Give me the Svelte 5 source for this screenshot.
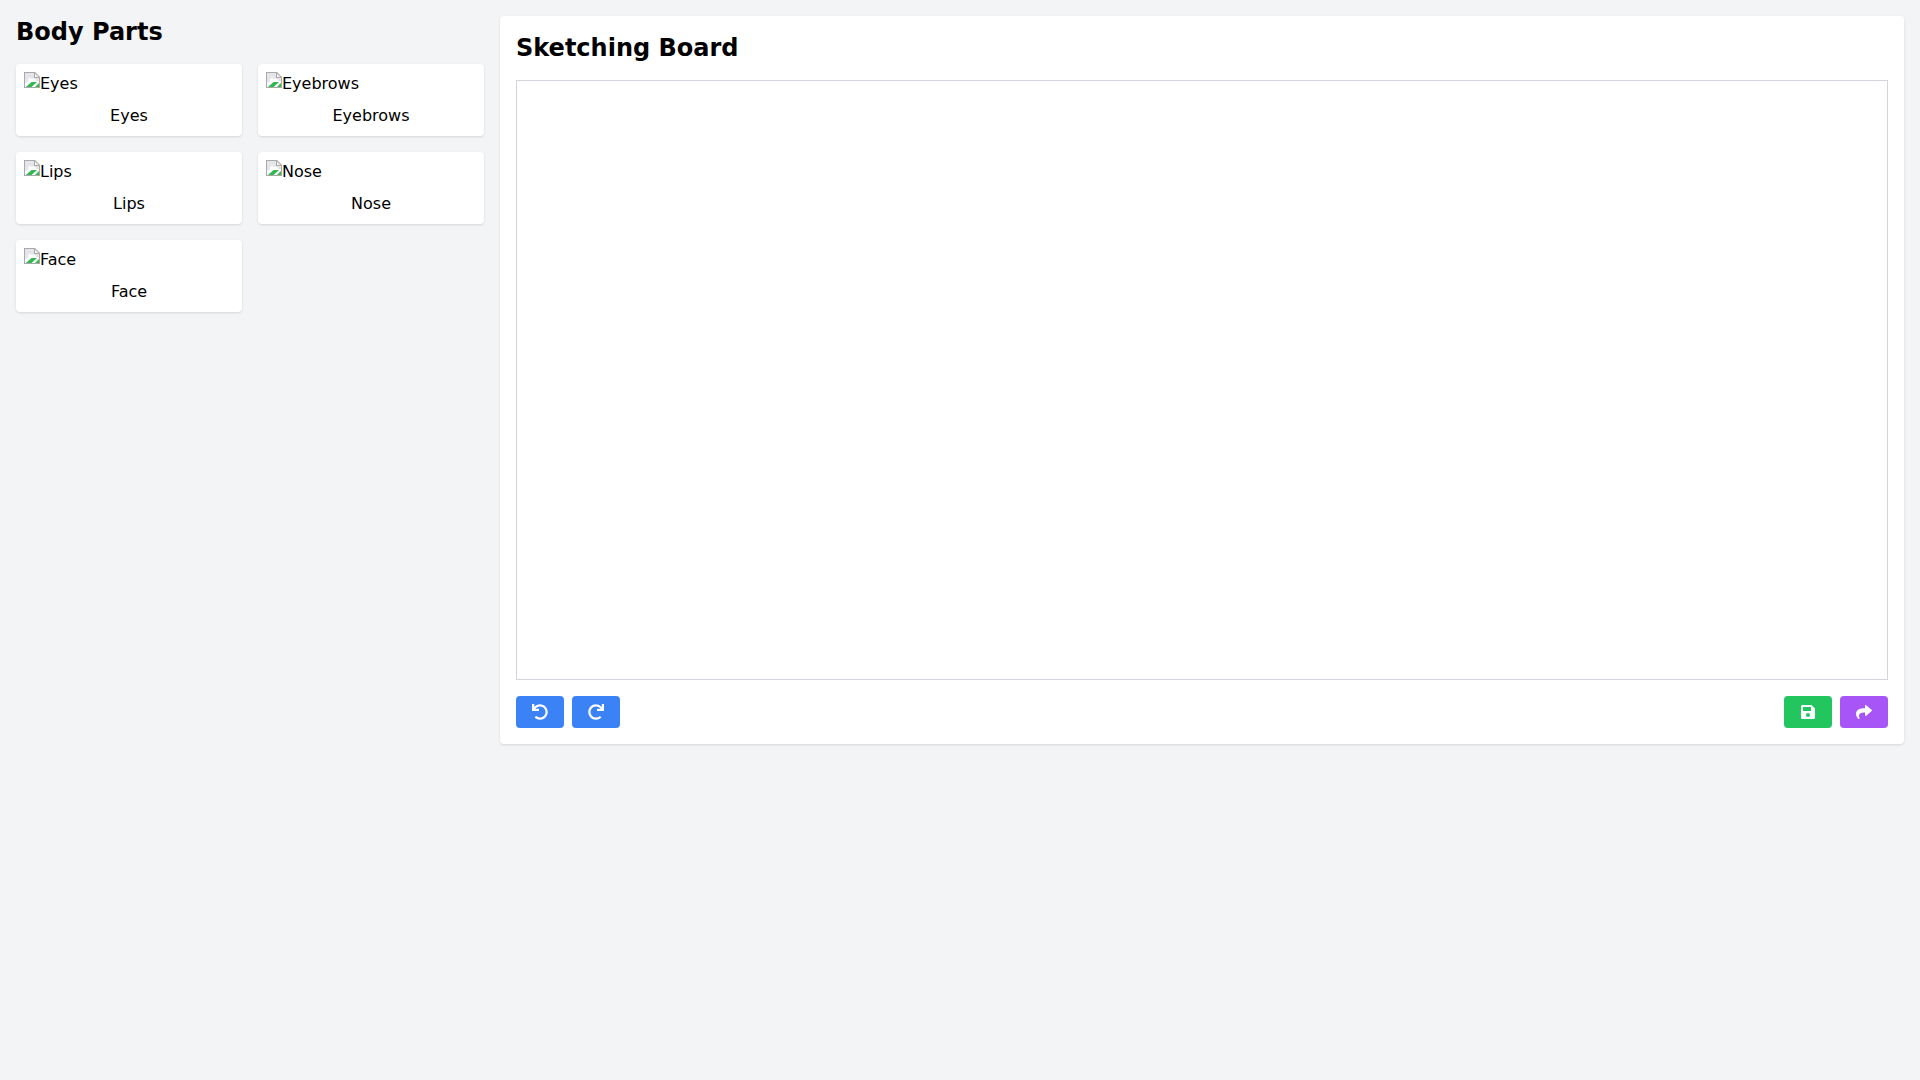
<script>
    const parts = [
        { name: "Eyes" },
        { name: "Eyebrows" },
        { name: "Lips" },
        { name: "Nose" },
        { name: "Face" },
    ];
</script>

<div class="page">
    <aside class="sidebar">
        <h2 class="sideTitle">Body Parts</h2>
        <div class="partsGrid">
            {#each parts as part}
                <div class="partCard">
                    <div class="thumb">
                        <svg class="broken" width="16" height="16" viewBox="0 0 16 16">
                            <path d="M0 0H11L16 5V16H0Z" fill="#a9a9a9" />
                            <path d="M1 1H10V6H15V15H1Z" fill="#e4e6ea" />
                            <path d="M11 1.5L14.5 5H11Z" fill="#f4f4f4" />
                            <path d="M4 8C4 6 7 6 8 7C10 6 12 7 12 9H4Z" fill="#fff" />
                            <path d="M1 11L5 9H15V11L12 15H1Z" fill="#fff" />
                            <path d="M2 15L7.5 10H13L7.5 15Z" fill="#2fb950" />
                            <path d="M11 15L15 11V15Z" fill="#2fb950" />
                        </svg><span>{part.name}</span>
                    </div>
                    <p class="partName">{part.name}</p>
                </div>
            {/each}
        </div>
    </aside>

    <main class="board">
        <h2 class="boardTitle">Sketching Board</h2>
        <div class="canvas"></div>
        <div class="toolbar">
            <div class="group">
                <button class="btn blue" aria-label="Undo">
                    <svg viewBox="0 0 512 512" width="16" height="16"><path d="M212.333 224.333H12c-6.627 0-12-5.373-12-12V12C0 5.373 5.373 0 12 0h48c6.627 0 12 5.373 12 12v78.112C117.773 39.279 184.26 7.47 258.175 8.007c136.906.994 246.448 111.623 246.157 248.532C504.041 393.258 393.12 504 256.333 504c-64.089 0-122.496-24.313-166.51-64.215-5.099-4.622-5.334-12.554-.467-17.42l33.967-33.967c4.474-4.474 11.662-4.717 16.401-.525C170.76 415.336 211.58 432 256.333 432c97.268 0 176-78.716 176-176 0-97.267-78.716-176-176-176-58.496 0-110.28 28.476-142.274 72.333h98.274c6.627 0 12 5.373 12 12v48c0 6.627-5.373 12-12 12z" /></svg>
                </button>
                <button class="btn blue" aria-label="Redo">
                    <svg viewBox="0 0 512 512" width="16" height="16"><path d="M500.33 0h-47.41a12 12 0 0 0-12 12.57l4 82.76A247.42 247.42 0 0 0 256 8C119.34 8 7.9 119.53 8 256.19 8.1 393.07 119.1 504 256 504a247.1 247.1 0 0 0 166.18-63.91 12 12 0 0 0 .48-17.43l-34-34a12 12 0 0 0-16.38-.55A176 176 0 1 1 402.1 157.8l-101.53-4.87a12 12 0 0 0-12.57 12v47.41a12 12 0 0 0 12 12h200.33a12 12 0 0 0 12-12V12a12 12 0 0 0-12-12z" /></svg>
                </button>
            </div>
            <div class="group">
                <button class="btn green" aria-label="Save">
                    <svg viewBox="0 0 448 512" width="14" height="16"><path d="M433.941 129.941l-83.882-83.882A48 48 0 0 0 316.118 32H48C21.49 32 0 53.49 0 80v352c0 26.51 21.49 48 48 48h352c26.51 0 48-21.49 48-48V163.882a48 48 0 0 0-14.059-33.941zM224 416c-35.346 0-64-28.654-64-64 0-35.346 28.654-64 64-64s64 28.654 64 64c0 35.346-28.654 64-64 64zm96-304.52V212c0 6.627-5.373 12-12 12H76c-6.627 0-12-5.373-12-12V108c0-6.627 5.373-12 12-12h228.52c3.183 0 6.235 1.264 8.485 3.515l3.48 3.48A11.996 11.996 0 0 1 320 111.48z" /></svg>
                </button>
                <button class="btn purple" aria-label="Share">
                    <svg viewBox="0 0 512 512" width="16" height="16"><path d="M503.691 189.836L327.687 37.851C312.281 24.546 288 35.347 288 56.015v80.053C127.371 137.907 0 170.1 0 322.326c0 61.441 39.581 122.309 83.333 154.132 13.653 9.931 33.111-2.533 28.077-18.631C66.066 312.814 132.917 274.316 288 272.085V360c0 20.7 24.3 31.453 39.687 18.164l176.004-152c11.071-9.562 11.086-26.753 0-36.328z" /></svg>
                </button>
            </div>
        </div>
    </main>
</div>

<style>
    :global(body) {
        background-color: #f3f4f6;
        font-family: "DejaVu Sans", sans-serif;
        font-size: 16px;
        line-height: 24px;
        color: #000;
    }
    .page {
        display: grid;
        grid-template-columns: 1fr 3fr;
        align-items: start;
        gap: 16px;
        padding: 16px;
        min-height: 1080px;
        box-sizing: border-box;
    }
    .sideTitle,
    .boardTitle {
        margin: 0 0 16px;
        font-size: 24px;
        line-height: 32px;
        font-weight: 700;
    }
    .partsGrid {
        display: grid;
        grid-template-columns: 1fr 1fr;
        gap: 16px;
    }
    .partCard {
        background: #fff;
        padding: 8px;
        border-radius: 4px;
        box-shadow: 0 1px 3px rgba(0, 0, 0, 0.1), 0 1px 2px -1px rgba(0, 0, 0, 0.1);
    }
    .thumb {
        display: flex;
        align-items: flex-start;
        height: 24px;
    }
    .broken {
        flex: none;
    }
    .partName {
        margin: 8px 0 0;
        text-align: center;
    }
    .board {
        background: #fff;
        padding: 16px;
        border-radius: 4px;
        box-shadow: 0 1px 3px rgba(0, 0, 0, 0.1), 0 1px 2px -1px rgba(0, 0, 0, 0.1);
    }
    .canvas {
        height: 600px;
        box-sizing: border-box;
        border: 1px solid #d1d5db;
    }
    .toolbar {
        display: flex;
        justify-content: space-between;
        margin-top: 16px;
    }
    .group {
        display: flex;
        gap: 8px;
    }
    .btn {
        display: flex;
        align-items: center;
        justify-content: center;
        width: 48px;
        height: 32px;
        padding: 0;
        border: none;
        border-radius: 4px;
    }
    .btn svg {
        fill: #fff;
    }
    .blue {
        background: #3b82f6;
    }
    .green {
        background: #22c55e;
    }
    .purple {
        background: #a855f7;
    }
</style>
